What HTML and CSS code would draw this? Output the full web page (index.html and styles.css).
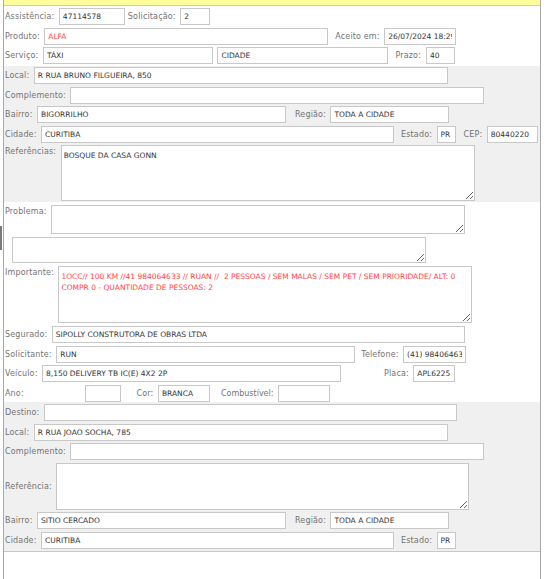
FILE: index.html
```html
<!DOCTYPE html>
<html lang="pt-BR">
<head>
<meta charset="utf-8">
<title>Atendimento</title>
<link rel="stylesheet" href="styles.css">
</head>
<body>
<div class="side-tab"></div>
<div class="frame">
  <div class="topbar"></div>

  <div class="sec sec-a">
    <div class="row">
      <label>Assistência:</label><input class="w66" value="47114578" readonly>
      <label class="ml3">Solicitação:</label><input class="w30" value="2" readonly>
    </div>
    <div class="row">
      <label>Produto:</label><input class="w284 red" value="ALFA" readonly>
      <label class="ml7">Aceito em:</label><input class="w72" value="26/07/2024 18:29" readonly>
    </div>
    <div class="row">
      <label>Serviço:</label><input class="w170" value="TÁXI" readonly><input class="w171" value="CIDADE" readonly>
      <label class="ml7">Prazo:</label><input class="w29 ml5" value="40" readonly>
    </div>
  </div>

  <div class="sec gray sec-b">
    <div class="row">
      <label>Local:</label><input class="w414" value="R RUA BRUNO FILGUEIRA, 850" readonly>
    </div>
    <div class="row">
      <label>Complemento:</label><input class="w414" value="" readonly>
    </div>
    <div class="row">
      <label>Bairro:</label><input class="w249" value="BIGORRILHO" readonly>
      <label class="ml9">Região:</label><input class="w119" value="TODA A CIDADE" readonly>
    </div>
    <div class="row">
      <label>Cidade:</label><input class="w353" value="CURITIBA" readonly>
      <label class="ml7">Estado:</label><input class="w19" value="PR" readonly>
      <label class="ml8">CEP:</label><input class="w51" value="80440220" readonly>
    </div>
    <div class="row-area top">
      <label>Referências:</label><textarea class="w414 h56" readonly>BOSQUE DA CASA GONN</textarea>
    </div>
  </div>

  <div class="sec sec-c">
    <div class="row-area top">
      <label>Problema:</label><textarea class="w414 h29" readonly></textarea>
    </div>
    <div class="row-area">
      <textarea class="w414 h26 ml7" readonly></textarea>
    </div>
    <div class="row-area top">
      <label>Importante:</label><textarea class="w414 h57 red" readonly>1OCC// 100 KM //41 984064633 // RUAN //  2 PESSOAS / SEM MALAS / SEM PET / SEM PRIORIDADE/ ALT: 0 COMPR 0 - QUANTIDADE DE PESSOAS: 2</textarea>
    </div>
    <div class="row">
      <label>Segurado:</label><input class="w413" value="SIPOLLY CONSTRUTORA DE OBRAS LTDA" readonly>
    </div>
    <div class="row">
      <label>Solicitante:</label><input class="w299" value="RUN" readonly>
      <label class="ml6">Telefone:</label><input class="w63" value="(41) 984064633" readonly>
    </div>
    <div class="row">
      <label>Veículo:</label><input class="w299" value="8,150 DELIVERY TB IC(E) 4X2 2P" readonly>
      <label class="ml43">Placa:</label><input class="w42" value="APL6225" readonly>
    </div>
    <div class="row">
      <label class="lbl-ano">Ano:</label><input class="w36" value="" readonly>
      <label class="ml16">Cor:</label><input class="w52" value="BRANCA" readonly>
      <label class="ml11 tight">Combustível:</label><input class="w52" value="" readonly>
    </div>
  </div>

  <div class="sec gray sec-d">
    <div class="row">
      <label>Destino:</label><input class="w413" value="" readonly>
    </div>
    <div class="row">
      <label>Local:</label><input class="w414" value="R RUA JOAO SOCHA, 785" readonly>
    </div>
    <div class="row">
      <label>Complemento:</label><input class="w414" value="" readonly>
    </div>
    <div class="row-area">
      <label>Referência:</label><textarea class="w413 h47" readonly></textarea>
    </div>
    <div class="row">
      <label>Bairro:</label><input class="w249" value="SITIO CERCADO" readonly>
      <label class="ml9">Região:</label><input class="w119" value="TODA A CIDADE" readonly>
    </div>
    <div class="row">
      <label>Cidade:</label><input class="w353" value="CURITIBA" readonly>
      <label class="ml7">Estado:</label><input class="w19" value="PR" readonly>
    </div>
  </div>
</div>
</body>
</html>
```

FILE: styles.css
```css
* { box-sizing: border-box; }
html, body { margin: 0; padding: 0; background: #fff; }
body {
  font-family: "DejaVu Sans", "Noto Sans", sans-serif;
  font-size: 8px;
  color: #737373;
  width: 550px;
  height: 579px;
  overflow: hidden;
  position: relative;
}
.side-tab {
  position: absolute;
  left: 0;
  top: 226px;
  width: 2px;
  height: 24px;
  background: #7a7a7a;
}
.frame {
  margin-left: 3px;
  width: 538px;
  height: 579px;
  border-left: 1px solid #a9a9a9;
  border-right: 1px solid #a9a9a9;
}
.topbar {
  height: 6px;
  background: #fdfd9c;
  border-bottom: 1px solid #d6d6a8;
}
.sec {
  padding-left: 1px;
  display: flex;
  flex-direction: column;
  gap: 2.5px;
}
.gray { background: #f0f0f0; }
.sec-a { padding-top: 2px; padding-bottom: 2px; }
.sec-b { padding-top: 1px; padding-bottom: 1px; }
.sec-c { padding-top: 3px; padding-bottom: 0.5px; gap: 3px; }
.sec-c .row + .row { margin-top: -0.5px; }
.sec-d { padding-top: 2px; padding-bottom: 2px; border-bottom: 1px solid #c8c8c8; }

.row {
  display: flex;
  align-items: center;
  height: 17px;
}
.row-area {
  display: flex;
  align-items: center;
}
.row-area.top { align-items: flex-start; }
.row-area.top label { padding-top: 1px; }

label { white-space: nowrap; line-height: 11px; letter-spacing: 0.15px; }
label.tight { letter-spacing: 0; }
.lbl-ano { width: 75px; }

input, textarea {
  font-family: inherit;
  font-size: 7.5px;
  color: #333;
  background: #fff;
  border: 1px solid #c8c8c8;
  border-radius: 0;
  outline: none;
  margin: 0 0 0 4.5px;
}
input {
  height: 17px;
  padding: 0 3px;
}
textarea {
  display: block;
  padding: 4px 2px;
  line-height: 11px;
  resize: both;
  overflow: hidden;
}
.red { color: #ff4646; }

.w19 { width: 19px; }
.w29 { width: 29px; }
.w30 { width: 30px; }
.w36 { width: 36px; }
.w42 { width: 42px; }
.w51 { width: 51px; }
.w52 { width: 52px; }
.w63 { width: 63px; }
.w66 { width: 66px; }
.w72 { width: 72px; }
.w119 { width: 119px; }
.w170 { width: 170px; }
.w171 { width: 171px; }
.w249 { width: 249px; }
.w284 { width: 284px; }
.w299 { width: 299px; }
.w353 { width: 353px; }
.w413 { width: 413px; }
.w414 { width: 414px; }

.h26 { height: 26px; }
.h29 { height: 29px; }
.h47 { height: 47px; }
.h56 { height: 56px; }
.h57 { height: 57px; }

.ml3 { margin-left: 3px; }
.ml5 { margin-left: 5px; }
.ml6 { margin-left: 6px; }
.ml7 { margin-left: 7px; }
.ml8 { margin-left: 8px; }
.ml9 { margin-left: 9px; }
.ml11 { margin-left: 11px; }
.ml16 { margin-left: 16px; }
.ml43 { margin-left: 43px; }
```
